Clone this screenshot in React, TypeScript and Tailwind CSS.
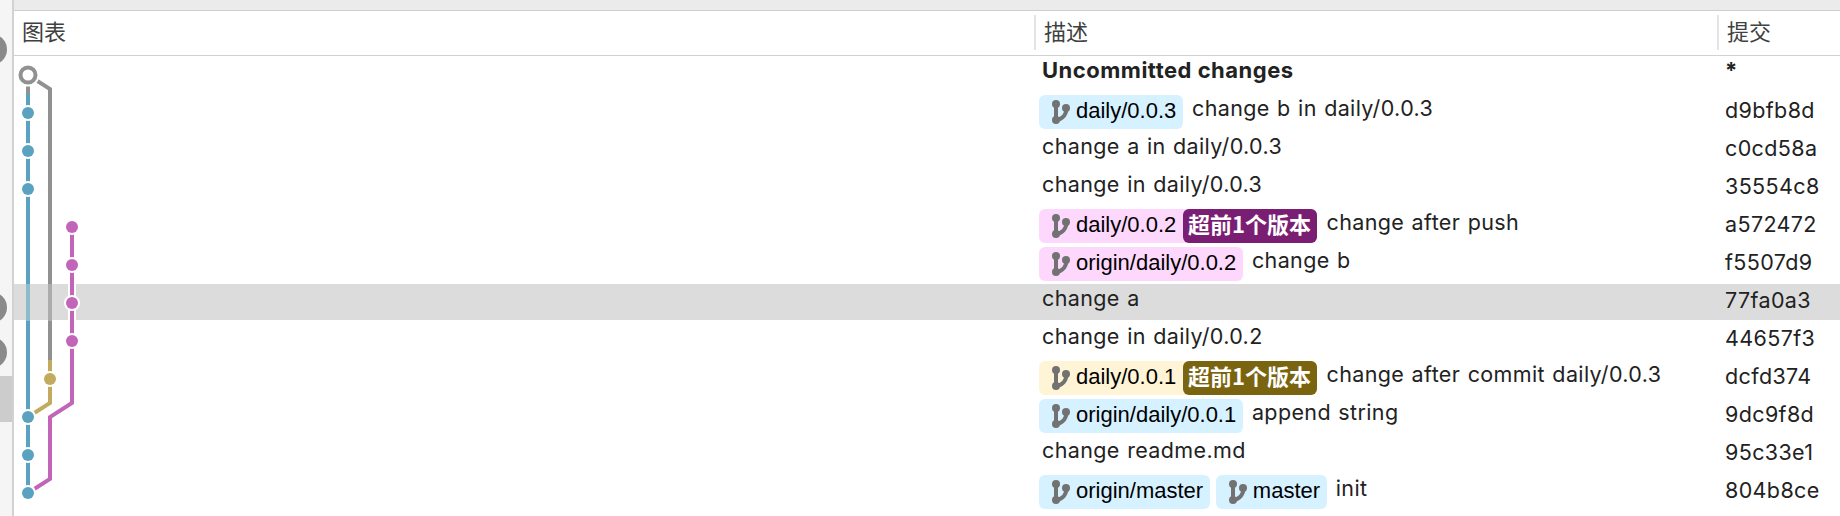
import React from "react";

type Tone = "blue" | "pink" | "yellow";
type Ref = { name: string; ahead?: string };
type Commit = { message: string; hash: string; tone?: Tone; refs?: Ref[]; selected?: boolean; bold?: boolean };

const commits: Commit[] = [
  { message: "Uncommitted changes", hash: "*", bold: true },
  { message: "change b in daily/0.0.3", hash: "d9bfb8d", tone: "blue", refs: [{ name: "daily/0.0.3" }] },
  { message: "change a in daily/0.0.3", hash: "c0cd58a" },
  { message: "change in daily/0.0.3", hash: "35554c8" },
  { message: "change after push", hash: "a572472", tone: "pink", refs: [{ name: "daily/0.0.2", ahead: "超前1个版本" }] },
  { message: "change b", hash: "f5507d9", tone: "pink", refs: [{ name: "origin/daily/0.0.2" }] },
  { message: "change a", hash: "77fa0a3", selected: true },
  { message: "change in daily/0.0.2", hash: "44657f3" },
  { message: "change after commit daily/0.0.3", hash: "dcfd374", tone: "yellow", refs: [{ name: "daily/0.0.1", ahead: "超前1个版本" }] },
  { message: "append string", hash: "9dc9f8d", tone: "blue", refs: [{ name: "origin/daily/0.0.1" }] },
  { message: "change readme.md", hash: "95c33e1" },
  { message: "init", hash: "804b8ce", tone: "blue", refs: [{ name: "origin/master" }, { name: "master" }] },
];

const tagTone: Record<Tone, string> = { blue: "bg-[#d6f1ff]", pink: "bg-[#fdd8fc]", yellow: "bg-[#fff4d6]" };
const aheadTone: Record<Tone, string> = { blue: "bg-[#1d5f80]", pink: "bg-[#7a1e73]", yellow: "bg-[#7a6410]" };

function BranchIcon() {
  return (
    <svg className="ml-3 h-6 w-5 shrink-0" viewBox="0 0 20 24" fill="none" stroke="#727272" strokeWidth="4">
      <path d="M5 4V20M15.500 8C15.500 14 12 19 5 20" />
      <g fill="#727272" stroke="none">
        <circle cx="5" cy="4" r="4" />
        <circle cx="5" cy="20" r="4" />
        <circle cx="15" cy="8" r="4" />
      </g>
    </svg>
  );
}

function Tag({ item, tone }: { item: Ref; tone: Tone }) {
  return (
    <div className={`flex h-[34px] rounded-[6px] font-['Liberation_Sans',sans-serif] text-[22px] tracking-normal text-black [word-spacing:0] ${tagTone[tone]}`}>
      <div className="flex items-center pr-[6.700px]">
        <BranchIcon />
        <span className="ml-[5px] leading-[30px] -mt-[3px] whitespace-nowrap">{item.name}</span>
      </div>
      {item.ahead && (
        <div className={`w-[134.500px] whitespace-nowrap rounded-[6px] pl-[5px] font-['Noto_Sans_CJK_SC',sans-serif] font-bold leading-[29px] text-white ${aheadTone[tone]}`}>
          {item.ahead}
        </div>
      )}
    </div>
  );
}

function Row({ commit }: { commit: Commit }) {
  const weight = commit.bold ? "font-bold text-[22px] tracking-[0.5px]" : "text-[21.5px] tracking-[0.37px] [word-spacing:1px]";
  return (
    <div className={`mb-0.5 flex h-9 shrink-0 text-[#222222] ${weight} ${commit.selected ? "bg-[#dcdcdc]" : ""}`}>
      <div className="w-[1025px] shrink-0" />
      <div className="flex w-[684px] shrink-0">
        {commit.refs && (
          <div className="mr-[9px] mt-px flex gap-1.5">
            {commit.refs.map((r) => (
              <Tag key={r.name} item={r} tone={commit.tone!} />
            ))}
          </div>
        )}
        <span className={`whitespace-nowrap leading-7 ${commit.refs ? "" : "ml-[3px]"}`}>{commit.message}</span>
      </div>
      <span className={commit.bold ? "ml-0.5 leading-7" : "ml-0.5 leading-8"}>{commit.hash}</span>
    </div>
  );
}

const BLUE = "#5aa2bf";
const PINK = "#c264b8";
const GOLD = "#c2aa5e";
const GRAY = "#919191";

const nodes: [number, number, string][] = [
  [14, 57, BLUE], [14, 95, BLUE], [14, 133, BLUE],
  [58, 171, PINK], [58, 209, PINK], [58, 247, PINK], [58, 285, PINK],
  [36, 323, GOLD],
  [14, 361, BLUE], [14, 399, BLUE], [14, 437, BLUE],
];

function Graph() {
  return (
    <svg className="absolute left-0 top-0" width="80" height="460" fill="none" strokeWidth="4">
      <path d="M14 19V38" stroke={GRAY} />
      <path d="M14 38V437" stroke={BLUE} />
      <path d="M14 19L36 33V304" stroke={GRAY} />
      <path d="M36 304V347L14 361" stroke={GOLD} />
      <path d="M12 228H16V265H12Z" fill="#8cbbcc" />
      <path d="M34 228H38V265H34Z" fill="#acacac" />
      <path d="M58 228V264" stroke="#fff" strokeWidth="8" />
      <path d="M58 171V347L36 361V423L14 437" stroke={PINK} />
      <circle cx="14" cy="19" r="11.500" fill="#fff" />
      <circle cx="14" cy="19" r="7.500" stroke={GRAY} />
      {nodes.map(([x, y, color]) => (
        <g key={`${x}-${y}`}>
          <circle cx={x} cy={y} r="8" fill="#fff" />
          <circle cx={x} cy={y} r="6" fill={color} />
        </g>
      ))}
    </svg>
  );
}

function Disc({ className }: { className: string }) {
  return <div className={`-ml-6 size-[31px] shrink-0 rounded-full bg-[#8a8a8a] ${className}`} />;
}

const heading = "flex items-center text-[22px] leading-8 text-[#404040]";

export default function App() {
  return (
    <div className="flex h-[516px] w-[1840px] overflow-hidden bg-white font-['Inter','Noto_Sans_CJK_SC',sans-serif]">
      <aside className="flex w-3.5 shrink-0 flex-col overflow-hidden border-r-2 border-[#d2d2d2] bg-[#f5f5f5]">
        <Disc className="mt-[34px]" />
        <Disc className="mt-[227px]" />
        <Disc className="mt-[14px]" />
        <div className="mt-2 h-[46px] w-3 shrink-0 bg-[#cccccc]" />
      </aside>
      <main className="flex min-w-0 flex-1 flex-col">
        <div className="h-[11px] shrink-0 border-b border-[#cfcfcf] bg-[#ebebeb]" />
        <header className="flex h-[45px] shrink-0 items-center border-b border-[#d2d2d2] pb-px">
          <div className={`${heading} h-[35px] w-[1020px] pb-0.5 pl-2`}>图表</div>
          <div className={`${heading} h-[35px] w-[683px] border-l-2 border-[#e4e4e4] pb-0.5 pl-2`}>描述</div>
          <div className={`${heading} h-[35px] border-l-2 border-[#e4e4e4] pb-0.5 pl-2`}>提交</div>
        </header>
        <div className="relative flex flex-col">
          {commits.map((c) => (
            <Row key={c.hash} commit={c} />
          ))}
          <Graph />
        </div>
      </main>
    </div>
  );
}
